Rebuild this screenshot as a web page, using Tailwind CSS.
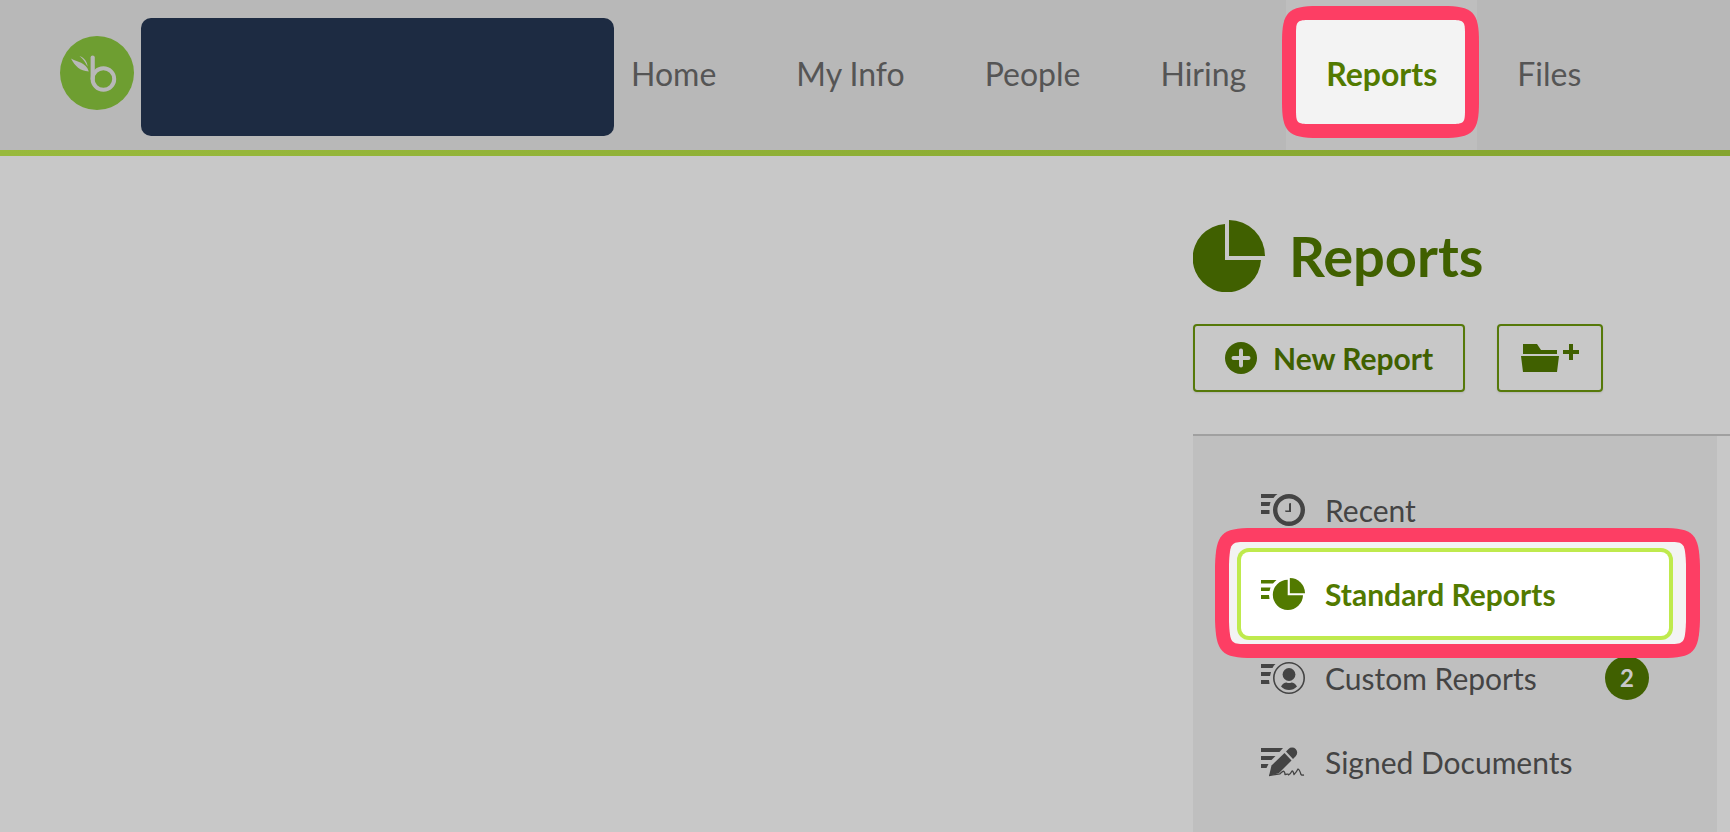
<!DOCTYPE html>
<html lang="en">
<head>
    <meta charset="UTF-8">
    <meta name="viewport" content="width=device-width, initial-scale=1.0">
    <title>Reports</title>
    <script src="https://cdn.jsdelivr.net/npm/@tailwindcss/browser@4"></script>
</head>
<body class="min-h-screen flex flex-col overflow-x-hidden bg-[#c8c8c8] font-['Lato',sans-serif] text-[#444]">

    <!-- Top bar -->
    <header class="shrink-0 bg-[#b8b8b8]">
        <div class="flex items-center h-[150px] pl-15">
            <a href="#" aria-label="BambooHR" class="shrink-0 mb-1">
                <svg class="size-[74px]" viewBox="0 0 74 74" fill="none">
                    <circle cx="37" cy="37" r="37" fill="#6e9e31"/>
                    <path d="M32.7 21.5V43" stroke="#b8b8b8" stroke-width="4.2" stroke-linecap="round"/>
                    <circle cx="43.4" cy="43" r="10.8" stroke="#b8b8b8" stroke-width="4"/>
                    <path d="M11 22.5C17 26 26 26 28.8 35.5C20 35 15 30 11 22.5Z" fill="#b8b8b8"/>
                    <path d="M19.5 20C24.500 22 27.500 26 27.500 30.500C25.500 26.500 23.500 23.500 19.500 20Z" fill="#b8b8b8"/>
                </svg>
            </a>
            <div class="w-[473px] h-[118px] ml-[7px] mt-1 shrink-0 rounded-[10px] bg-[#1d2b42]"></div>
            <nav class="flex h-full -ml-[23px] text-[32px] leading-[148px] text-[#555] whitespace-nowrap">
                <a href="#" class="px-10">Home</a>
                <a href="#" class="px-10">My Info</a>
                <a href="#" class="px-10">People</a>
                <a href="#" class="px-10">Hiring</a>
                <a href="#" class="relative px-10 bg-[#bebebe] font-bold text-[#527a00]" aria-current="page">
                    <svg class="absolute -left-1 top-1.5 w-[197px] h-[132px]" viewBox="0 0 197 132">
                        <path fill="#fd3e64" d="M0 36C0 6 6 0 36 0H161C191 0 197 6 197 36V96C197 126 191 132 161 132H36C6 132 0 126 0 96Z"/>
                        <path fill="#f3f3f3" d="M14 28C14 15 15 14 28 14H169C182 14 183 15 183 28V104C183 117 182 118 169 118H28C15 118 14 117 14 104Z"/>
                    </svg>
                    <span class="relative">Reports</span>
                </a>
                <a href="#" class="px-10">Files</a>
            </nav>
        </div>
        <div class="h-1.5 bg-linear-to-r from-[#98b93c] to-[#84a42e]"></div>
    </header>

    <main class="flex-1 flex flex-col w-[537px] ml-auto pt-16">
        <h1 class="flex items-center gap-6 h-18 text-[56px] leading-[72px] font-bold text-[#406000]">
            <svg class="size-18 shrink-0" viewBox="0 0 72 72" fill="currentColor">
                <path d="M32 4A34.200 34.200 0 1 0 68 40H32Z"/>
                <path d="M36 0A36 36 0 0 1 72 36H36Z"/>
            </svg>
            Reports
        </h1>

        <div class="flex gap-8 mt-8">
            <button class="flex items-center gap-4 h-[68px] px-[30px] border-2 border-[#56790a] rounded shadow-[0_1px_2px_#0000001a] text-[30px] leading-9 font-bold text-[#406000] whitespace-nowrap">
                <svg class="size-8 shrink-0" viewBox="0 0 32 32">
                    <circle cx="16" cy="16" r="16" fill="#406000"/>
                    <path d="M16 8.500V23.500M8.500 16H23.500" stroke="#c8c8c8" stroke-width="4" stroke-linecap="round"/>
                </svg>
                New Report
            </button>
            <button aria-label="New Folder" class="flex items-center justify-center w-[106px] h-[68px] border-2 border-[#56790a] rounded shadow-[0_1px_2px_#0000001a] text-[#406000]">
                <svg class="w-[58px] h-7" viewBox="0 0 58 28" fill="currentColor">
                    <path d="M2 0H16L20 6H36V10H2Z"/>
                    <path d="M0 12H38L36 28H2Z"/>
                    <path d="M48 0H52V6H58V10H52V16H48V10H42V6H48Z"/>
                </svg>
            </button>
        </div>

        <div class="flex-1 mt-[42px] border-t-2 border-[#a0a0a0] pr-[13px] flex">
            <nav class="flex-1 bg-[#bfbfbf] px-12 pt-8">
                <ul class="text-[30px] leading-9 whitespace-nowrap">
                    <li>
                        <a href="#" class="flex items-center gap-5 h-21 px-5">
                            <svg class="w-11 h-8 shrink-0" viewBox="0 0 44 32" fill="currentColor">
                                <path d="M0 0H16.500Q14 1.500 12.500 4H0ZM0 8H9.500L8.500 12H0ZM0 16H8.500V20H0Z"/>
                                <circle cx="28" cy="16" r="13.800" fill="none" stroke="currentColor" stroke-width="4.400"/>
                                <path d="M28 9.500L30 9V18H24.500L24 16.500H28Z"/>
                            </svg>
                            Recent
                        </a>
                    </li>
                    <li class="relative z-10">
                        <svg class="absolute -left-[26px] -top-6 w-[485px] h-[130px]" viewBox="0 0 485 130">
                            <path fill="#fd3e64" d="M0 38C1 6 6 0 38 0H447C479 0 484 6 485 38V92C484 124 479 130 447 130H38C6 130 1 124 0 92Z"/>
                            <path fill="#f3f3f3" d="M14 36C15 15 16 14 30 14H455C469 14 470 15 471 36V94C470 115 469 116 455 116H30C16 116 15 115 14 94Z"/>
                        </svg>
                        <a href="#" class="relative flex items-center gap-5 h-21 px-5 rounded-lg bg-white ring-4 ring-[#bfea4d] font-bold text-[#527a00]" aria-current="page">
                            <svg class="w-11 h-8 shrink-0" viewBox="0 0 44 32" fill="currentColor">
                                <path d="M0 2H15.500Q13.500 3.500 12 5.500H0ZM0 9.500H9.500L8.500 13H0ZM0 17H8L8.500 21H0Z"/>
                                <path d="M26.700 1.700A15.100 15.100 0 1 0 42 17.200H26.700Z"/>
                                <path d="M28.800 0A15.200 15.200 0 0 1 44 15.300H28.800Z"/>
                            </svg>
                            Standard Reports
                        </a>
                    </li>
                    <li>
                        <a href="#" class="flex items-center gap-5 h-21 px-5">
                            <svg class="w-11 h-8 shrink-0" viewBox="0 0 44 32" fill="currentColor">
                                <path d="M0 2H14.500Q12.500 3.500 11.500 6H0ZM0 10H10L9 14H0ZM0 18H8L8.500 22H0Z"/>
                                <circle cx="28" cy="16" r="15.200" fill="none" stroke="currentColor" stroke-width="1.600"/>
                                <circle cx="28" cy="12.500" r="6.400"/>
                                <path d="M20 24.500C21.500 22 23.500 20.500 25.500 20.500Q28 21.500 30.500 20.500C32.500 20.500 34.500 22 36 24.500Q32.500 28 28 28T20 24.500Z"/>
                            </svg>
                            Custom Reports
                            <span class="flex items-center justify-center size-11 ml-auto rounded-full bg-[#406000] text-2xl font-bold text-[#c8c8c8]">2</span>
                        </a>
                    </li>
                    <li>
                        <a href="#" class="flex items-center gap-5 h-21 px-5">
                            <svg class="w-11 h-8 shrink-0" viewBox="0 0 44 32" fill="currentColor">
                                <path d="M0 2H22L18.500 6H0ZM0 10H14.500L10.500 14H0ZM0 18H7.500L5.500 22H0Z"/>
                                <path d="M25 5.500L27.500 3A5 5 0 0 1 34.700 10.200L32 13Z"/>
                                <path d="M23.500 7L30.500 14.500L18 27L8 30L10.500 19.500Z"/>
                                <path d="M8 29.500L19 27.800Q22 24.500 23 25.500T24 28.500Q28 27.500 27.500 29Q29.500 28 31 25Q32 24.500 33 28.500Q35.500 26 37 23Q38.500 23.500 40 28.500Q41 29.500 43 29" fill="none" stroke="currentColor" stroke-width="1.300" stroke-linejoin="round"/>
                            </svg>
                            Signed Documents
                        </a>
                    </li>
                </ul>
            </nav>
        </div>
    </main>

</body>
</html>
